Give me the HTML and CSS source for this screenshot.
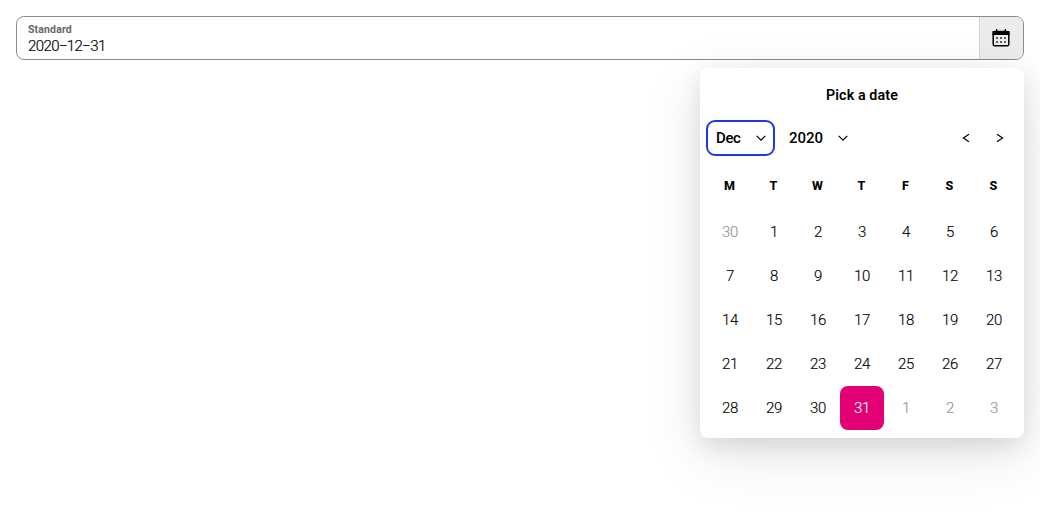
FILE: index.html
```html
<!DOCTYPE html>
<html lang="en">
<head>
<meta charset="utf-8">
<title>Date picker</title>
<link rel="stylesheet" href="styles.css">
</head>
<body>
<div class="picker">
  <div class="field">
    <div class="field-text">
      <span class="label">Standard</span>
      <span class="value">2020−12−31</span>
    </div>
    <button class="toggle" aria-label="Open calendar">
      <svg width="20" height="20" viewBox="0 0 20 20"><path d="M5.7 1v3M14.3 1v3" stroke="#000" stroke-width="1.3"/><rect x="2.2" y="3.6" width="15.6" height="14.2" rx="1.6" fill="none" stroke="#000" stroke-width="1.5"/><path d="M1.5 3h17v4h-17z"/><path d="M5.2 9.2h1.6v1.6H5.2zm4 0h1.6v1.6H9.2zm4 0h1.6v1.6h-1.6zm-8 4h1.6v1.6H5.2zm4 0h1.6v1.6H9.2zm4 0h1.6v1.6h-1.6z"/></svg>
    </button>
  </div>
  <div class="dialog">
    <h2 class="heading">Pick a date</h2>
    <div class="controls">
      <div class="select month"><span class="month-text">Dec</span><svg class="chevron" width="10" height="6" viewBox="0 0 10 6"><path d="M.7.9 5 5.1 9.3.9"/></svg></div>
      <div class="select year"><span class="year-text">2020</span><svg class="chevron" width="10" height="6" viewBox="0 0 10 6"><path d="M.7.9 5 5.1 9.3.9"/></svg></div>
      <div class="nav">
        <svg class="chevron" width="8" height="10" viewBox="0 0 8 10"><path d="M7 1.2 1.4 5 7 8.8"/></svg>
        <svg class="chevron" width="8" height="10" viewBox="0 0 8 10"><path d="M1 1.2 6.6 5 1 8.8"/></svg>
      </div>
    </div>
    <div class="grid weekdays"><span>M</span><span>T</span><span>W</span><span>T</span><span>F</span><span>S</span><span>S</span></div>
    <div class="grid days">
      <span class="outside">30</span><span>1</span><span>2</span><span>3</span><span>4</span><span>5</span><span>6</span>
      <span>7</span><span>8</span><span>9</span><span>10</span><span>11</span><span>12</span><span>13</span>
      <span>14</span><span>15</span><span>16</span><span>17</span><span>18</span><span>19</span><span>20</span>
      <span>21</span><span>22</span><span>23</span><span>24</span><span>25</span><span>26</span><span>27</span>
      <span>28</span><span>29</span><span>30</span><span class="selected">31</span><span class="outside">1</span><span class="outside">2</span><span class="outside">3</span>
    </div>
  </div>
</div>
</body>
</html>
```
FILE: styles.css
```css
* { box-sizing: border-box; }
body { margin: 0; height: 532px; padding: 16px; overflow: hidden; background: #fff; color: #000; font-family: Roboto, sans-serif; }
.picker { display: flex; flex-direction: column; align-items: flex-end; gap: 8px; }
.field { width: 100%; height: 44px; display: flex; border: 1px solid #8c8c8c; border-radius: 8px; overflow: hidden; }
.field-text { flex: 1; display: flex; flex-direction: column; padding: 6px 11px; }
.label { font-size: 10.5px; line-height: 13px; font-weight: 700; color: #666; letter-spacing: .15px; }
.value { font-size: 15px; line-height: 18px; margin-top: 1px; letter-spacing: -.6px; font-weight: 300; -webkit-text-stroke: .2px #000; }
.toggle { width: 44px; padding: 0 2px 0 0; border: 0; border-left: 1px solid #d4d4d4; background: #ececec; display: flex; align-items: center; justify-content: center; }
.dialog { width: 324px; height: 370px; padding: 0 8px 8px; border-radius: 8px; background: #fff; box-shadow: 0 16px 64px rgba(0,0,0,.1), 0 8px 24px rgba(0,0,0,.1); }
.heading { margin: 0; height: 52px; padding-top: 2px; line-height: 50px; text-align: center; font-size: 14.3px; font-weight: 600; letter-spacing: .1px; }
.controls { display: flex; height: 36px; margin-left: -2px; }
.select { display: flex; align-items: center; font-size: 15px; font-weight: 500; }
.month { width: 69px; border: 2px solid #2238df; border-radius: 9px; padding: 0 7px 0 8px; justify-content: space-between; }
.month-text { letter-spacing: -.4px; }
.year { width: 73px; padding: 0 0 0 14px; justify-content: space-between; flex: none; }
.year-text { margin-right: 15px; }
.chevron { flex: none; fill: none; stroke: #000; stroke-width: 1.2; }
.nav { margin-left: auto; display: flex; align-items: center; gap: 26px; padding-right: 12px; }
.grid { display: grid; grid-template-columns: repeat(7, 44px); text-align: center; }
.weekdays { height: 54px; padding-top: 5px; line-height: 50px; font-size: 12.5px; font-weight: 800; }
.weekdays span { padding-right: 1px; }
.days { grid-auto-rows: 44px; line-height: 44px; font-size: 15px; font-weight: 300; letter-spacing: -.2px; -webkit-text-stroke: .15px currentColor; }
.outside { color: #949494; }
.selected { color: #fff; background: #e20074; border-radius: 8px; }
```
